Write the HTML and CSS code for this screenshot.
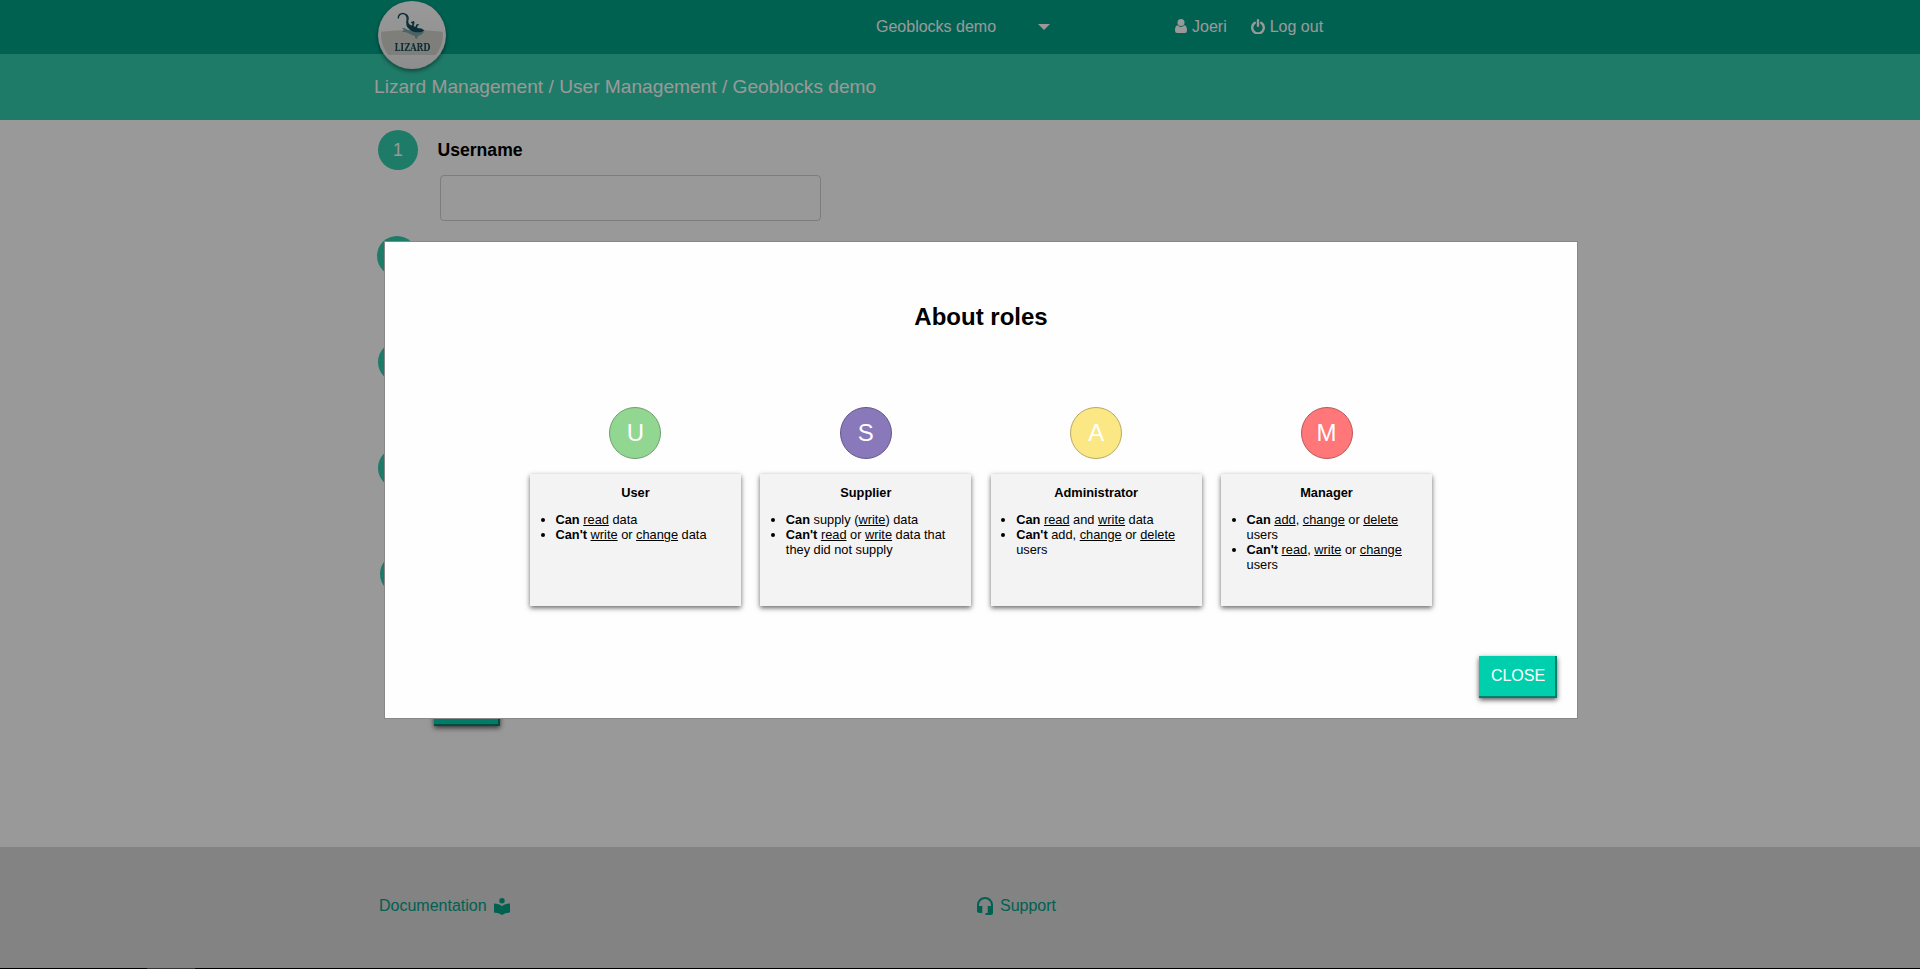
FILE: index.html
```
<!DOCTYPE html>
<html lang="en">
<head>
<meta charset="utf-8">
<title>Lizard Management</title>
<link rel="stylesheet" href="styles.css">
</head>
<body>
<div class="page">
  <header class="topbar">
    <a class="logo">
      <svg width="74" height="74" viewBox="0 0 74 74">
        <defs><linearGradient id="disc" x1="0" y1="0" x2="0" y2="1"><stop offset="0" stop-color="#fff"/><stop offset="1" stop-color="#ececec"/></linearGradient>
        <clipPath id="inner"><circle cx="37" cy="35" r="31"/></clipPath></defs>
        <circle cx="37" cy="35" r="34" fill="url(#disc)"/>
        <g clip-path="url(#inner)"><path d="M4 32Q37 28 70 32V55H4z" fill="#d2d2ce"/></g>
        <path d="M33 30l-4-2-2 0 2 2-2 2 3 0 3 1 4 2 3 1 0 2 2 1 1-3 3-1 3-3z" fill="#7fa5a8"/>
        <path d="M23.300 18.500C23 14 28 12 31 15c2.500 3 .5 5 1 8" fill="none" stroke="#174e5a" stroke-width="1.300"/>
        <path d="M29.500 13.500C33 14 34.500 17 33.500 20c-.7 2.500.2 4 2 5l1.500.5.500-2-1.500-.5v-1l3-1 .5 1.500-.8 3.500 1.600 1 1-2.500 2.300-.5.400 1-1.500.7-.3 2.300 4.300.6 3 1.800-2.500 1.500c-5 1-9 .2-12-2.200-3.500-2.700-4.500-5.200-3-8.700.8-2.500.6-5.500-2-7.500z" fill="#12505c"/>
        <text x="37.500" y="51" text-anchor="middle" class="logo-text" textLength="36" lengthAdjust="spacingAndGlyphs">LIZARD</text>
      </svg>
    </a>
    <div class="organisation"><span>Geoblocks demo</span><i class="caret"></i></div>
    <nav class="account">
      <a><svg width="12" height="14" viewBox="0 0 12 14"><circle cx="6" cy="3.500" r="3.500"/><path d="M2.600 6.300Q6 9.500 9.400 6.300C11.500 6.600 12 9 12 11.500Q12 14 9.800 14H2.200Q0 14 0 11.500C0 9 .5 6.600 2.600 6.300z"/></svg>Joeri</a>
      <a><svg width="14" height="15" viewBox="0 0 14 15"><path d="M3.800 3.800A5.800 5.800 0 1 0 10.200 3.800M7 1.200v5.600" fill="none" stroke="#fff" stroke-width="2.400" stroke-linecap="round"/></svg>Log out</a>
    </nav>
  </header>
  <div class="breadcrumbs">Lizard Management / User Management / Geoblocks demo</div>
  <main class="form">
    <section class="step"><span class="step-number">1</span><div class="field"><label for="username">Username</label><input id="username" type="text"></div></section>
    <section class="step step-wide"><span class="step-number"></span></section>
    <section class="step"><span class="step-number"></span></section>
    <section class="step"><span class="step-number"></span></section>
    <section class="step step-narrow"><span class="step-number"></span></section>
    <button class="button save"></button>
  </main>
  <footer class="footer">
    <a class="documentation">Documentation<svg width="16" height="17" viewBox="0 0 16 17"><circle cx="8" cy="2.700" r="2.700"/><path d="M0 5.500Q5 5.500 8 8.300 11 5.500 16 5.500V14.500Q11 14.500 8 17 5 14.500 0 14.500z"/></svg></a>
    <a class="support"><svg width="16" height="18" viewBox="0 0 16 18"><path d="M1 12V8a7 7 0 0 1 14 0v8q0 1-1 1H8.500" fill="none" stroke="#00a288" stroke-width="2"/><path d="M0 9h5.300v7H2.500Q0 16 0 13.500zM10.700 9H16v7h-5.300z"/></svg>Support</a>
  </footer>
</div>
<div class="taskbar"><span class="taskbar-item"></span></div>
<div class="overlay"></div>
<div class="modal">
  <h2>About roles</h2>
  <div class="roles">
    <article class="role"><span class="badge badge-user">U</span><div class="card"><h3>User</h3><ul><li><b>Can</b> <u>read</u> data</li><li><b>Can't</b> <u>write</u> or <u>change</u> data</li></ul></div></article>
    <article class="role"><span class="badge badge-supplier">S</span><div class="card"><h3>Supplier</h3><ul><li><b>Can</b> supply (<u>write</u>) data</li><li><b>Can't</b> <u>read</u> or <u>write</u> data that they did not supply</li></ul></div></article>
    <article class="role"><span class="badge badge-admin">A</span><div class="card"><h3>Administrator</h3><ul><li><b>Can</b> <u>read</u> and <u>write</u> data</li><li><b>Can't</b> add, <u>change</u> or <u>delete</u> users</li></ul></div></article>
    <article class="role"><span class="badge badge-manager">M</span><div class="card"><h3>Manager</h3><ul><li><b>Can</b> <u>add</u>, <u>change</u> or <u>delete</u> users</li><li><b>Can't</b> <u>read</u>, <u>write</u> or <u>change</u> users</li></ul></div></article>
  </div>
  <button class="button close">CLOSE</button>
</div>
</body>
</html>
```
FILE: styles.css
```
* { box-sizing: border-box; }
body { margin: 0; height: 969px; overflow: hidden; background: #fff; font: 16px "Liberation Sans", Arial, sans-serif; color: #000; }
.page { display: flex; flex-direction: column; height: 968px; }
.topbar { display: flex; height: 54px; flex: none; padding-left: 375px; background: #00a288; color: #fff; }
.logo { width: 74px; height: 74px; flex: none; filter: drop-shadow(0 2px 2px rgba(0, 0, 0, .45)); }
.logo-text { font: bold 10.5px "DejaVu Serif", serif; fill: #174e5a; }
.organisation { display: flex; align-items: center; width: 299px; height: 54px; margin-left: 427px; }
.caret { margin-left: 42px; border: 6px solid transparent; border-top-color: #fff; border-bottom: 0; }
.account { display: flex; align-items: center; height: 54px; gap: 24px; }
.account a { display: flex; align-items: center; gap: 5px; }
.account svg { margin-top: -2px; fill: #fff; }
.breadcrumbs { height: 66px; flex: none; padding: 22px 0 0 374px; background: #33cdac; color: #fff; font-size: 19.15px; line-height: 22px; }
.form { flex: 1; padding: 10px 0 0 378px; }
.step { display: flex; height: 106px; }
.step-wide { margin-left: -1px; }
.step-narrow { margin-left: 2px; }
.step-number { display: flex; align-items: center; justify-content: center; flex: none; width: 40px; height: 40px; border-radius: 50%; background: #33cdac; color: #fff; font-size: 17.6px; }
.field { display: flex; flex-direction: column; padding: 10px 0 0 19.5px; }
.field label { font-size: 17.6px; font-weight: bold; line-height: 20px; }
.field input { width: 381px; height: 46px; margin: 15px 0 0 2.5px; border: 1px solid #d0d1d8; border-radius: 4px; background: #fff; }
.button { display: block; padding: 0; border: solid #00806b; border-width: 0 2px 2px 0; background: #00cfae; box-shadow: 0 2px 5px rgba(0, 0, 0, .65); color: #fff; font: 16px "Liberation Sans", Arial, sans-serif; }
.save { width: 66px; height: 42px; margin: 24px 0 0 56px; }
.footer { display: flex; height: 121px; flex: none; padding: 48px 0 0 379px; background: #dadada; color: #00a288; }
.footer a { display: flex; align-items: center; height: 22px; }
.footer svg { fill: #00a288; }
.documentation { width: 598px; gap: 7px; }
.support { gap: 7px; }
.taskbar { height: 1px; padding-left: 147px; background: #000; }
.taskbar-item { display: block; width: 48px; height: 1px; background: #555; }
.overlay { position: fixed; inset: 0; background: rgba(0, 0, 0, .4); }
.modal { position: fixed; top: 241px; left: 384px; display: flex; flex-direction: column; width: 1194px; height: 478px; border: 1px solid #888; background: #fefefe; }
.modal h2 { margin: 61px 0 0; font-size: 24px; line-height: 28px; text-align: center; }
.roles { display: grid; grid-template-columns: repeat(4, 1fr); gap: 19.400px; width: 902px; margin: 76px 0 0 145px; }
.role { display: flex; flex-direction: column; align-items: center; }
.badge { display: flex; align-items: center; justify-content: center; width: 52px; height: 52px; border: 1px solid; border-radius: 50%; color: #fff; font-size: 24px; }
.badge-user { background: #92d791; border-color: #719f70; }
.badge-supplier { background: #8a79ba; border-color: #65588a; }
.badge-admin { background: #fbe784; border-color: #b9aa62; }
.badge-manager { background: #ff7779; border-color: #b9595b; }
.card { width: 100%; height: 132px; margin-top: 15px; padding: 11px 9px 0; background: #f3f3f3; box-shadow: 0 2px 5px rgba(0, 0, 0, .6); font-size: 12.8px; line-height: 15px; }
.card h3 { margin: 0; font-size: 12.8px; line-height: 15px; text-align: center; }
.card ul { margin: 12px 0 0; padding-left: 16.500px; }
.close { align-self: flex-end; width: 78px; height: 42px; margin: 50px 20px 0 0; padding-left: 2px; }
```
